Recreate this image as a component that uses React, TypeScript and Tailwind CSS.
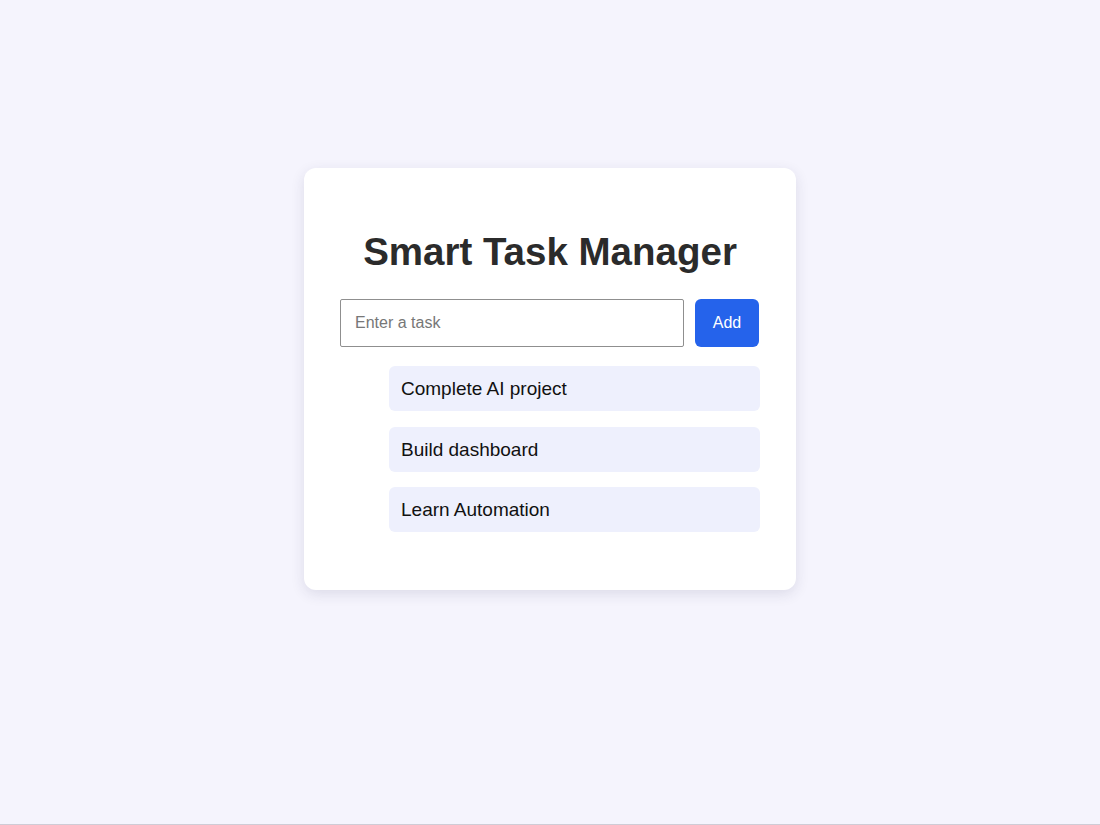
import { useState } from 'react';

const INITIAL_TASKS = ['Complete AI project', 'Build dashboard', 'Learn Automation'];

export default function App() {
  const [tasks, setTasks] = useState<string[]>(INITIAL_TASKS);
  const [text, setText] = useState('');

  const addTask = () => {
    const t = text.trim();
    if (!t) return;
    setTasks([...tasks, t]);
    setText('');
  };

  return (
    <div
      className="min-h-screen h-[825px] bg-[#f5f4fd] border-b border-[#cfccd6] flex justify-center pt-[168px]"
      style={{ fontFamily: '"Liberation Sans", Arial, sans-serif' }}
    >
      <div className="w-[492px] h-[422px] bg-white rounded-xl shadow-[0_4px_14px_rgba(40,40,80,0.12)] px-9 pt-[60px]">
        <h1 className="text-center text-[38.5px] leading-[48px] font-bold text-[#2b2b2b]">
          Smart Task Manager
        </h1>
        <div className="flex gap-[11px] mt-[23px]">
          <input
            value={text}
            onChange={(e) => setText(e.target.value)}
            onKeyDown={(e) => e.key === 'Enter' && addTask()}
            placeholder="Enter a task"
            className="w-[344px] h-12 border border-[#8f8f8f] rounded-[2px] px-[14px] text-base text-[#222] placeholder:text-[#777] outline-none"
          />
          <button
            onClick={addTask}
            className="w-16 h-12 bg-[#2563eb] text-white text-base rounded-md"
          >
            Add
          </button>
        </div>
        <ul className="ml-[49px] mt-[19px] flex flex-col gap-[15.5px]">
          {tasks.map((task) => (
            <li
              key={task}
              className="h-[45px] flex items-center bg-[#eef0fd] rounded-md px-3 pt-[2px] text-[19px] text-[#111]"
            >
              {task}
            </li>
          ))}
        </ul>
      </div>
    </div>
  );
}
